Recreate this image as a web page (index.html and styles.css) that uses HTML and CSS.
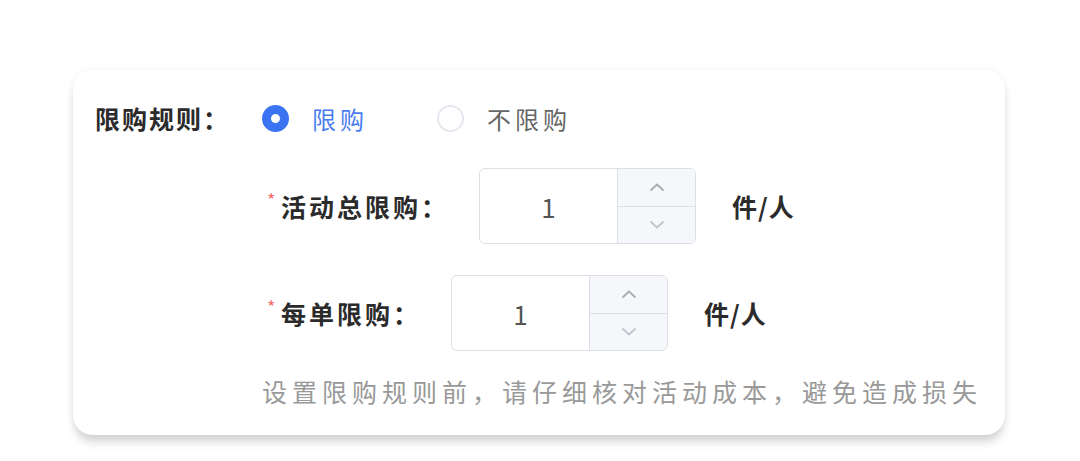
FILE: index.html
```html
<!DOCTYPE html>
<html lang="zh-CN">
<head>
    <meta charset="UTF-8">
    <meta name="viewport" content="width=device-width, initial-scale=1.0">
    <title>限购规则</title>
    <link rel="stylesheet" href="styles.css">
</head>
<body>
    <div class="card">
        <!-- row 1: radio choice -->
        <div class="rule-row">
            <span class="rule-label">限购规则：</span>
            <div class="radio-group">
                <label class="radio checked">
                    <span class="radio-dot"></span>
                    <span class="radio-text">限购</span>
                </label>
                <label class="radio">
                    <span class="radio-dot"></span>
                    <span class="radio-text">不限购</span>
                </label>
            </div>
        </div>

        <div class="limit-box">
            <div class="limit-row">
                <span class="req">*</span>
                <span class="limit-label">活动总限购：</span>
                <div class="num-input">
                    <div class="num-value">1</div>
                    <div class="num-spin">
                        <span class="spin-btn">
                            <svg width="16" height="9" viewBox="0 0 16 9"><path d="M1.5 7.5 L8 1.5 L14.5 7.5" fill="none" stroke="#a8abb2" stroke-width="1.8"/></svg>
                        </span>
                        <span class="spin-btn">
                            <svg width="16" height="9" viewBox="0 0 16 9"><path d="M1.5 1.5 L8 7.5 L14.5 1.5" fill="none" stroke="#c0c4cc" stroke-width="1.8"/></svg>
                        </span>
                    </div>
                </div>
                <span class="unit">件/人</span>
            </div>

            <div class="limit-row">
                <span class="req">*</span>
                <span class="limit-label">每单限购：</span>
                <div class="num-input">
                    <div class="num-value">1</div>
                    <div class="num-spin">
                        <span class="spin-btn">
                            <svg width="16" height="9" viewBox="0 0 16 9"><path d="M1.5 7.5 L8 1.5 L14.5 7.5" fill="none" stroke="#a8abb2" stroke-width="1.8"/></svg>
                        </span>
                        <span class="spin-btn">
                            <svg width="16" height="9" viewBox="0 0 16 9"><path d="M1.5 1.5 L8 7.5 L14.5 1.5" fill="none" stroke="#c0c4cc" stroke-width="1.8"/></svg>
                        </span>
                    </div>
                </div>
                <span class="unit">件/人</span>
            </div>

            <p class="hint">设置限购规则前，请仔细核对活动成本，避免造成损失</p>
        </div>

        <!-- faint watermark -->
        <span class="mark mark-1">李家 13614055</span>
        <span class="mark mark-2">李家 186</span>
        <span class="mark mark-3">李家 13614055</span>
    </div>
</body>
</html>
```

FILE: styles.css
```css
body {
    margin: 0;
    padding: 0 0 30px;
    background-color: #ffffff;
    font-family: "Noto Sans CJK SC", "Noto Sans", sans-serif;
    color: #303133;
}

.card {
    position: relative;
    box-sizing: border-box;
    width: 932px;
    height: 365px;
    margin: 70px 0 0 73px;
    padding: 28px 0 0 22px;
    background-color: #ffffff;
    border-radius: 20px;
    box-shadow: 0 9px 10px -2px rgba(0, 0, 0, 0.16), 0 0 8px rgba(0, 0, 0, 0.06);
}

.rule-row {
    display: flex;
    align-items: center;
    height: 40px;
}

.rule-label {
    font-size: 25px;
    font-weight: bold;
    letter-spacing: 2px;
    width: 167px;
    color: #2b2b2b;
}

.radio-group {
    display: flex;
    align-items: center;
}

.radio {
    display: flex;
    align-items: center;
    margin-right: 69px;
}

.radio-dot {
    box-sizing: border-box;
    width: 27px;
    height: 27px;
    border-radius: 50%;
    border: 2px solid #e4e7ed;
    background-color: #ffffff;
    margin-right: 23px;
}

.radio.checked .radio-dot {
    border: 9px solid #3b74f2;
}

.radio-text {
    font-size: 24px;
    letter-spacing: 4px;
    color: #666666;
}

.radio.checked .radio-text {
    color: #4a7cef;
}

.limit-box {
    margin: 30px 0 0 167px;
}

.limit-row {
    display: flex;
    align-items: center;
    height: 76px;
    padding-left: 5px;
    margin-bottom: 31px;
}

.req {
    color: #f56c6c;
    font-size: 18px;
    margin-top: -14px;
    width: 14px;
}

.limit-label {
    font-size: 25px;
    font-weight: bold;
    letter-spacing: 3px;
    margin-right: 30px;
    color: #2b2b2b;
}

.num-input {
    display: flex;
    box-sizing: border-box;
    width: 217px;
    height: 76px;
    border: 1px solid #dcdfe6;
    border-radius: 6px;
    overflow: hidden;
}

.num-value {
    flex: 1;
    display: flex;
    align-items: center;
    justify-content: center;
    font-size: 26px;
    color: #555555;
}

.num-spin {
    display: flex;
    flex-direction: column;
    width: 77px;
    border-left: 1px solid #dcdfe6;
    background-color: #f5f7fa;
}

.spin-btn {
    flex: 1;
    display: flex;
    align-items: center;
    justify-content: center;
}

.spin-btn + .spin-btn {
    border-top: 1px solid #dcdfe6;
}

.unit {
    font-size: 25px;
    font-weight: bold;
    letter-spacing: 1px;
    margin-left: 36px;
    color: #2b2b2b;
}

.hint {
    margin: -9px 0 0 0;
    font-size: 25px;
    line-height: 36px;
    letter-spacing: 5px;
    color: #999999;
    white-space: nowrap;
}

.mark {
    position: absolute;
    font-size: 26px;
    color: rgba(0, 0, 0, 0.02);
    transform: rotate(-20deg);
    white-space: nowrap;
}

.mark-1 {
    left: 190px;
    top: 40px;
}

.mark-2 {
    left: 750px;
    top: 110px;
}

.mark-3 {
    left: 300px;
    top: 275px;
}
```
